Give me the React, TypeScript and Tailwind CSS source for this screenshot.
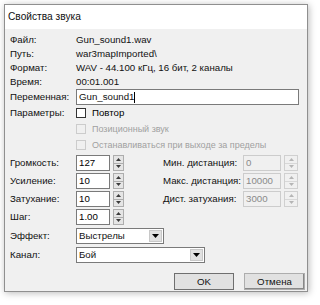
import React from "react";

const font = { fontFamily: "'Liberation Sans', Arial, sans-serif" };

function Spin({ disabled, w }: { disabled?: boolean; w: string }) {
  const arrow = disabled ? "#b5b5b5" : "#3a3a3a";
  return (
    <div className={`${w} h-[16px] flex flex-col border ${disabled ? "border-[#d0d0d0] bg-[#f0f0f0]" : "border-[#adadad] bg-[#e5e5e5]"}`}>
      <div className={`flex-1 flex items-center justify-center border-b ${disabled ? "border-[#d8d8d8]" : "border-[#adadad]"}`}>
        <svg width="5" height="3" viewBox="0 0 5 3"><path d="M0 3 L2.5 0 L5 3 Z" fill={arrow} /></svg>
      </div>
      <div className="flex-1 flex items-center justify-center">
        <svg width="5" height="3" viewBox="0 0 5 3"><path d="M0 0 L2.5 3 L5 0 Z" fill={arrow} /></svg>
      </div>
    </div>
  );
}

function NumInput({ value, disabled, w }: { value: string; disabled?: boolean; w: string }) {
  return (
    <div className={`${w} h-[16px] border flex items-center pl-[2px] ${disabled ? "border-[#cccccc] bg-[#f0f0f0] text-[#8a8a8a]" : "border-[#7a7a7a] bg-white text-black"}`}>
      {value}
    </div>
  );
}

function Combo({ value, w }: { value: string; w: string }) {
  return (
    <div className={`${w} h-[16px] border border-[#7a7a7a] bg-white flex items-stretch`}>
      <div className="flex-1 flex items-center pl-[2px]">{value}</div>
      <div className="w-[13px] my-[1px] mr-[1px] bg-[#e1e1e1] border border-[#c8c8c8] flex items-center justify-center">
        <svg width="7" height="4" viewBox="0 0 7 4"><path d="M0 0 L3.5 4 L7 0 Z" fill="#000" /></svg>
      </div>
    </div>
  );
}

function Check({ disabled, label }: { disabled?: boolean; label: string }) {
  return (
    <div className="flex items-center h-[16px]">
      <div className={`w-[10px] h-[10px] border ${disabled ? "border-[#cccccc]" : "border-[#333333] bg-white"}`} />
      <span className={`ml-[6px] ${disabled ? "text-[#a0a0a0] text-[9px]" : "text-black"}`}>{label}</span>
    </div>
  );
}

export default function App() {
  const leftRows = [
    ["Громкость:", "127"],
    ["Усиление:", "10"],
    ["Затухание:", "10"],
    ["Шаг:", "1.00"],
  ];
  const rightRows = [
    ["Мин. дистанция:", "0"],
    ["Макс. дистанция:", "10000"],
    ["Дист. затухания:", "3000"],
  ];
  return (
    <div className="w-[320px] h-[305px] bg-white text-[9.7px] leading-none text-[#111]" style={font}>
      <div className="ml-[4px] pt-[4px]">
        <div className="w-[304px] h-[288px] border border-[#8f8f8f] shadow-[1px_1px_7px_rgba(0,0,0,0.28)] flex flex-col bg-[#f0f0f0]">
          <div className="h-[24px] bg-white flex items-center pl-[3px] text-[10.2px]">Свойства звука</div>
          <div className="flex-1 flex flex-col pl-[5px] pt-[4px]">
            {[
              ["Файл:", "Gun_sound1.wav"],
              ["Путь:", "war3mapImported\\"],
              ["Формат:", "WAV - 44.100 кГц, 16 бит, 2 каналы"],
              ["Время:", "00:01.001"],
            ].map(([l, v]) => (
              <div key={l} className="flex items-center h-[14px]">
                <div className="w-[66px]">{l}</div>
                <div>{v}</div>
              </div>
            ))}
            <div className="flex items-center h-[16px]">
              <div className="w-[66px]">Переменная:</div>
              <div className="w-[223px] h-[16px] border border-[#7a7a7a] bg-white flex items-center pl-[2px]">
                Gun_sound1<span className="w-px h-[11px] bg-black" />
              </div>
            </div>
            <div className="flex">
              <div className="w-[66px] h-[16px] flex items-center">Параметры:</div>
              <div className="flex flex-col">
                <Check label="Повтор" />
                <Check disabled label="Позиционный звук" />
                <Check disabled label="Останавливаться при выходе за пределы" />
              </div>
            </div>
            <div className="flex mt-[2px]">
              <div className="flex flex-col gap-[2px] w-[153px]">
                {leftRows.map(([l, v]) => (
                  <div key={l} className="flex items-center h-[16px]">
                    <div className="w-[66px]">{l}</div>
                    <NumInput value={v} w="w-[34px]" />
                    <div className="ml-[3px]"><Spin w="w-[11px]" /></div>
                  </div>
                ))}
              </div>
              <div className="flex flex-col gap-[2px]">
                {rightRows.map(([l, v]) => (
                  <div key={l} className="flex items-center h-[16px]">
                    <div className="w-[80px] whitespace-nowrap">{l}</div>
                    <NumInput value={v} disabled w="w-[38px]" />
                    <div className="ml-[3px]"><Spin disabled w="w-[14px]" /></div>
                  </div>
                ))}
              </div>
            </div>
            <div className="flex items-center h-[16px] mt-[3px]">
              <div className="w-[66px]">Эффект:</div>
              <Combo value="Выстрелы" w="w-[88px]" />
            </div>
            <div className="flex items-center h-[16px] mt-[3px]">
              <div className="w-[66px]">Канал:</div>
              <Combo value="Бой" w="w-[129px]" />
            </div>
            <div className="flex justify-end gap-[10px] mt-[10px] pr-[2px]">
              <button className="w-[60px] h-[17px] bg-[#e1e1e1] border border-[#6f6f6f] flex items-center justify-center">OK</button>
              <button className="w-[61px] h-[17px] bg-[#e1e1e1] border border-[#adadad] shadow-[inset_-1px_-1px_0_#888] flex items-center justify-center">Отмена</button>
            </div>
          </div>
        </div>
      </div>
    </div>
  );
}
